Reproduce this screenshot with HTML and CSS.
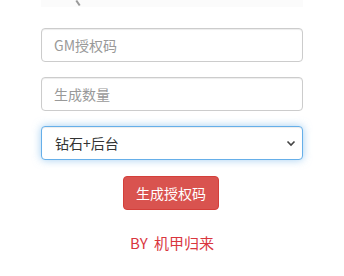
FILE: index.html
```html
<!DOCTYPE html>
<html lang="zh">
<head>
<meta charset="utf-8">
<link rel="stylesheet" href="styles.css">
</head>
<body>
<div class="wrap">
  <div class="top-band"><span class="mark"></span></div>
  <form class="form">
    <input class="field" type="text" placeholder="GM授权码">
    <input class="field" type="text" placeholder="生成数量">
    <div class="select-box">
      <select class="field select focus">
        <option>钻石+后台</option>
      </select>
      <svg class="chev" width="10" height="7" viewBox="0 0 10 7"><path d="M1.5 1.5 L5 5 L8.5 1.5" fill="none" stroke="#444" stroke-width="1.6"/></svg>
    </div>
    <div class="btn-row"><button type="button" class="btn">生成授权码</button></div>
  </form>
  <div class="credit">BY 机甲归来</div>
</div>
</body>
</html>
```
FILE: styles.css
```css
html, body { margin: 0; padding: 0; background: #fff; }
body { font-family: "Microsoft YaHei", "Noto Sans CJK SC", "Noto Sans", sans-serif; font-size: 14px; color: #555; }
.wrap { width: 344px; height: 276px; overflow: hidden; }
.top-band { margin: 0 41px; height: 7px; background: #fbfbfb; position: relative; }
.mark { position: absolute; left: 36px; top: 0; width: 2px; height: 6px; background: #999; transform: rotate(-35deg); }
.form { display: flex; flex-direction: column; gap: 15px; margin: 21px 41px 0; }
.field {
  box-sizing: border-box; width: 262px; height: 34px; padding: 6px 12px;
  font-family: inherit; font-size: 14px; color: #555; background: #fff;
  border: 1px solid #ccc; border-radius: 4px;
  box-shadow: inset 0 1px 1px rgba(0,0,0,.075); outline: none; margin: 0;
}
.field::placeholder { color: #999; }
.select-box { position: relative; }
.select { appearance: none; -webkit-appearance: none; color: #333; padding-left: 13px; }
.focus { border-color: #66afe9; box-shadow: inset 0 1px 1px rgba(0,0,0,.075), 0 0 8px rgba(102,175,233,.6); }
.chev { position: absolute; right: 7px; top: 14px; }
.btn-row { display: flex; justify-content: center; margin-top: 1px; }
.btn {
  box-sizing: border-box; height: 34px; padding: 6px 12px; font-family: inherit; font-size: 14px;
  color: #fff; background: #d9534f; border: 1px solid #d43f3a; border-radius: 4px; margin-left: -2px;
}
.credit { text-align: center; color: #d9363e; font-size: 15px; word-spacing: 3px; margin-top: 23px; line-height: 20px; }
```
